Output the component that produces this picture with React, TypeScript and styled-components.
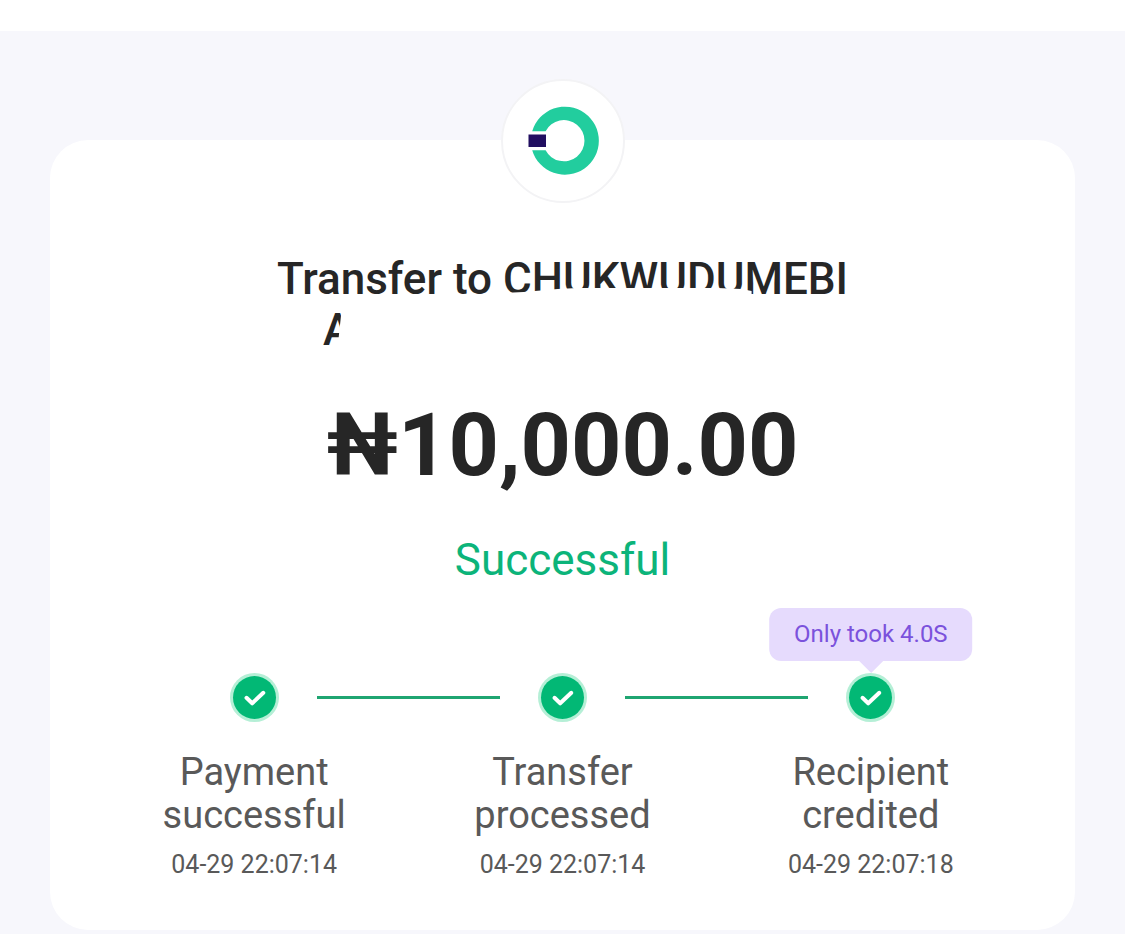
import React from "react";
import styled, { createGlobalStyle } from "styled-components";

const GlobalStyle = createGlobalStyle`
  *, *::before, *::after { box-sizing: border-box; }
  html, body { margin: 0; padding: 0; }
  body {
    min-height: 100vh;
    background: #f7f7fc;
    font-family: Roboto, "Liberation Sans", sans-serif;
    color: #262626;
  }
  h1, p, ol { margin: 0; padding: 0; }
`;

const TopStrip = styled.header`
  height: 31px;
  background: #ffffff;
`;

const Page = styled.main`
  padding: 48px 50px 4px;
`;

const Card = styled.section`
  display: flex;
  flex-direction: column;
  align-items: center;
  margin-top: 61px;
  padding: 0 50px 50px;
  background: #ffffff;
  border-radius: 38px;
  text-align: center;
`;

const BankBadge = styled.div`
  display: flex;
  align-items: center;
  justify-content: center;
  width: 124px;
  height: 124px;
  margin-top: -61px;
  border: 2px solid #f3f3f5;
  border-radius: 50%;
  background: #ffffff;
`;

const Title = styled.h1`
  position: relative;
  margin-top: 51px;
  font-size: 44px;
  font-weight: 500;
  line-height: 51px;
  white-space: nowrap;
`;

const Surname = styled.span`
  display: block;
  padding-left: 46px;
  text-align: left;
`;

const Redaction = styled.svg`
  position: absolute;
  inset: 0;
  width: 100%;
  height: 100%;
`;

const Amount = styled.p`
  margin-top: 37px;
  font-size: 88px;
  font-weight: 700;
  line-height: 104px;
`;

const Status = styled.p`
  margin-top: 37px;
  font-size: 44px;
  line-height: 52px;
  color: #0cb47a;
`;

const Steps = styled.ol`
  display: grid;
  grid-template-columns: repeat(3, 1fr);
  width: 100%;
  margin-top: 87px;
  list-style: none;
`;

const Step = styled.li`
  display: flex;
  flex-direction: column;
  align-items: center;
`;

const Track = styled.div`
  display: flex;
  align-items: center;
  gap: 38px;
  width: 100%;
`;

const Segment = styled.span<{ $hidden?: boolean }>`
  flex: 1;
  height: 3px;
  background: ${(p) => (p.$hidden ? "transparent" : "#1fa571")};
`;

const Dot = styled.div`
  position: relative;
  width: 49px;
  height: 49px;
`;

const Tip = styled.span`
  position: absolute;
  bottom: 61px;
  left: 50%;
  transform: translateX(-50%);
  padding: 0 25px;
  border-radius: 12px;
  background: #e6dbfd;
  color: #7b52dc;
  font-size: 24px;
  line-height: 53px;
  white-space: nowrap;

  &::after {
    content: "";
    position: absolute;
    top: 100%;
    left: 50%;
    margin-left: -12px;
    border: 12px solid transparent;
    border-top-color: #e6dbfd;
    border-bottom: 0;
  }
`;

const StepName = styled.p`
  width: 212px;
  margin-top: 29px;
  font-size: 38px;
  line-height: 43px;
  color: #595959;
`;

const StepTime = styled.time`
  margin-top: 13px;
  font-size: 25px;
  line-height: 30px;
  color: #595959;
`;

const BankLogo = () => (
  <svg width="72" height="70" viewBox="0 0 72 70" role="img" aria-label="Bank">
    <path
      d="M5.2 25.2A34 34 0 1 1 5.2 44.2L18.6 44.2A20.6 20.6 0 1 0 18.6 25.2Z"
      fill="#22cd9e"
    />
    <rect x="1.5" y="28.5" width="17.5" height="12.5" fill="#210e60" />
  </svg>
);

const CheckIcon = () => (
  <svg width="49" height="49" viewBox="0 0 49 49" aria-hidden="true">
    <circle cx="24.5" cy="24.5" r="24.5" fill="#b5efd6" />
    <circle cx="24.5" cy="24.5" r="21.5" fill="#02b875" />
    <path
      d="M16.5 24.8L22.2 30.3L33.3 19.8"
      fill="none"
      stroke="#ffffff"
      strokeWidth="4"
      strokeLinecap="round"
      strokeLinejoin="round"
    />
  </svg>
);

const steps = [
  { name: "Payment successful", time: "04-29 22:07:14" },
  { name: "Transfer processed", time: "04-29 22:07:14" },
  { name: "Recipient credited", time: "04-29 22:07:18", tip: "Only took 4.0S" },
];

export default function App() {
  return (
    <>
      <GlobalStyle />
      <TopStrip />
      <Page>
        <Card>
          <BankBadge>
            <BankLogo />
          </BankBadge>
          <Title>
            Transfer to CHUKWUDUMEBI
            <Surname>A</Surname>
            <Redaction viewBox="0 0 570 102" aria-hidden="true">
              <path
                d="M226 39L246 38L280 35L300 34L440 34L464 35L474 37L474 50L226 50Z"
                fill="#ffffff"
              />
              <path d="M64 56H100V100H58V84H61Z" fill="#ffffff" />
            </Redaction>
          </Title>
          <Amount>₦10,000.00</Amount>
          <Status>Successful</Status>
          <Steps>
            {steps.map((step, i) => (
              <Step key={step.name}>
                <Track>
                  <Segment $hidden={i === 0} />
                  <Dot>
                    <CheckIcon />
                    {step.tip && <Tip>{step.tip}</Tip>}
                  </Dot>
                  <Segment $hidden={i === steps.length - 1} />
                </Track>
                <StepName>{step.name}</StepName>
                <StepTime>{step.time}</StepTime>
              </Step>
            ))}
          </Steps>
        </Card>
      </Page>
    </>
  );
}
